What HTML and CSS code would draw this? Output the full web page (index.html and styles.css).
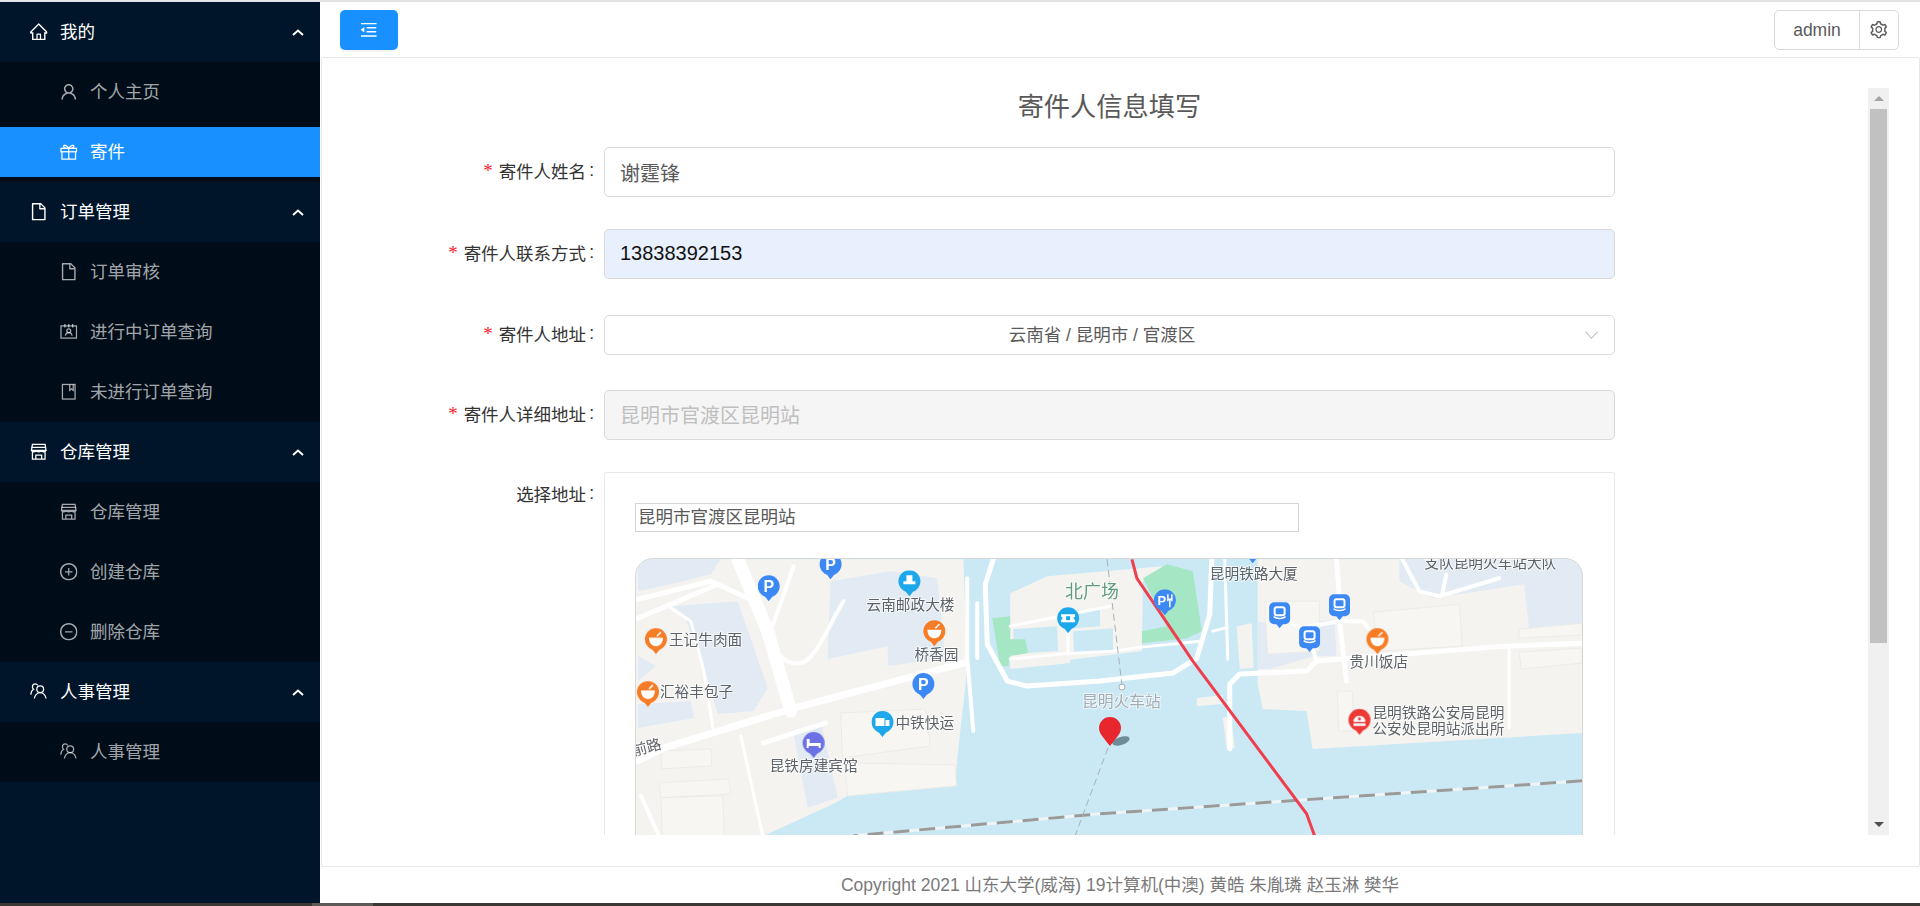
FILE: index.html
```html
<!DOCTYPE html>
<html lang="zh-CN">
<head>
<meta charset="utf-8">
<title>寄件人信息填写</title>
<link rel="stylesheet" href="styles.css">
</head>
<body>
<svg class="defs" aria-hidden="true">
  <defs>
    <symbol id="i-home" viewBox="64 64 896 896"><path d="M946.5 505L560.1 118.8l-25.9-25.9a31.5 31.5 0 0 0-44.4 0L77.5 505a63.9 63.9 0 0 0-18.8 46c.4 35.2 29.7 63.3 64.9 63.3h42.5V940h691.8V614.3h43.4c17.1 0 33.2-6.7 45.3-18.8a63.6 63.6 0 0 0 18.7-45.3c0-17-6.7-33.1-18.8-45.2zM568 868H456V664h112v204zm217.9-325.7V868H632V640c0-22.1-17.9-40-40-40H432c-22.1 0-40 17.9-40 40v228H238.1V542.3h-96l370-369.7 23.1 23.1L882 542.3h-96.1z"/></symbol>
    <symbol id="i-user" viewBox="64 64 896 896"><path d="M858.5 763.6a374 374 0 0 0-80.6-119.5 375.63 375.63 0 0 0-119.5-80.6c-.4-.2-.8-.3-1.2-.5C719.5 518 760 444.7 760 362c0-137-111-248-248-248S264 225 264 362c0 82.7 40.5 156 102.8 201.1-.4.2-.8.3-1.2.5-44.8 18.9-85 46-119.5 80.6a375.63 375.63 0 0 0-80.6 119.5A371.7 371.7 0 0 0 136 901.8a8 8 0 0 0 8 8.2h60c4.4 0 7.9-3.5 8-7.8 2-77.2 33-149.5 87.8-204.3 56.7-56.7 132-87.9 212.2-87.9s155.5 31.2 212.2 87.9C779 752.7 810 825 812 902.2c.1 4.4 3.6 7.8 8 7.8h60a8 8 0 0 0 8-8.2c-1-47.8-10.9-94.3-29.5-138.2zM512 534c-45.9 0-89.1-17.9-121.6-50.4S340 407.9 340 362c0-45.9 17.9-89.1 50.4-121.6S466.1 190 512 190s89.1 17.9 121.6 50.4S684 316.1 684 362c0 45.9-17.9 89.1-50.4 121.6S557.9 534 512 534z"/></symbol>
    <symbol id="i-file" viewBox="64 64 896 896"><path d="M854.6 288.6L639.4 73.4c-6-6-14.1-9.4-22.6-9.4H192c-17.7 0-32 14.3-32 32v832c0 17.7 14.3 32 32 32h640c17.7 0 32-14.3 32-32V311.3c0-8.5-3.4-16.7-9.4-22.7zM790.2 326H602V137.8L790.2 326zm1.8 562H232V136h302v216a42 42 0 0 0 42 42h216v494z"/></symbol>
    <symbol id="i-plus" viewBox="64 64 896 896"><path d="M696 480H544V328c0-4.4-3.6-8-8-8h-48c-4.4 0-8 3.6-8 8v152H328c-4.4 0-8 3.6-8 8v48c0 4.4 3.6 8 8 8h152v152c0 4.4 3.6 8 8 8h48c4.4 0 8-3.6 8-8V544h152c4.4 0 8-3.6 8-8v-48c0-4.4-3.6-8-8-8z"/><path d="M512 64C264.6 64 64 264.6 64 512s200.6 448 448 448 448-200.6 448-448S759.4 64 512 64zm0 820c-205.4 0-372-166.6-372-372s166.6-372 372-372 372 166.6 372 372-166.6 372-372 372z"/></symbol>
    <symbol id="i-minus" viewBox="64 64 896 896"><path d="M696 480H328c-4.4 0-8 3.6-8 8v48c0 4.4 3.6 8 8 8h368c4.4 0 8-3.6 8-8v-48c0-4.4-3.6-8-8-8z"/><path d="M512 64C264.6 64 64 264.6 64 512s200.6 448 448 448 448-200.6 448-448S759.4 64 512 64zm0 820c-205.4 0-372-166.6-372-372s166.6-372 372-372 372 166.6 372 372-166.6 372-372 372z"/></symbol>
    <symbol id="i-gift" viewBox="0 0 18 18"><g class="ln"><rect x="1" y="5.5" width="16" height="3.5"/><path d="M2 9v7.5h14V9M9 5.5v11M9 5.5C7 2 3.8 1.5 3.8 3.5S7 5.5 9 5.5C11 5.500 14.200 5.500 14.200 3.500S11 2 9 5.500"/></g></symbol>
    <symbol id="i-contacts" viewBox="0 0 18 18"><g class="ln"><rect x="1" y="3" width="16" height="12.500"/><path d="M5 1v3.500M9 1v3.500M13 1v3.500"/><circle cx="9" cy="8" r="2"/><path d="M5.500 13c.5-2 2-3 3.500-3s3 1 3.500 3"/></g></symbol>
    <symbol id="i-book" viewBox="0 0 18 18"><g class="ln"><rect x="2.500" y="1.500" width="13" height="15"/><path d="M10 1.500v6l1.800-1.500 1.800 1.500v-6"/></g></symbol>
    <symbol id="i-shop" viewBox="0 0 18 18"><g class="ln"><path d="M2.500 1.500h13l1 6h-15zM1.500 7.500c.5 2 4.500 2 5 0 .5 2 4.500 2 5 0 .5 2 4.500 2 5 0M2.500 9.500v7h13v-7M6 16.500v-4h6v4"/><path d="M1.500 4.500h15"/></g></symbol>
    <symbol id="i-team" viewBox="0 0 18 18"><g class="ln"><circle cx="10.500" cy="6.500" r="3.500"/><path d="M4.500 16c.3-3.500 3-6 6-6s5.700 2.500 6 6M8 2.500C7.300 1.500 6.500 1 5.500 1 3.800 1 2.500 2.300 2.500 4c0 1 .5 1.900 1.200 2.500C2 7.500 1 9.500.8 12"/></g></symbol>
    <symbol id="i-up" viewBox="0 0 12 7"><path class="arrow" d="M1 6l5-4.500L11 6"/></symbol>
    <symbol id="i-outdent" viewBox="64 64 896 896"><path d="M408 442h480c4.400 0 8-3.600 8-8v-56c0-4.400-3.600-8-8-8H408c-4.400 0-8 3.600-8 8v56c0 4.400 3.600 8 8 8zm-8 204c0 4.400 3.600 8 8 8h480c4.400 0 8-3.600 8-8v-56c0-4.400-3.600-8-8-8H408c-4.400 0-8 3.600-8 8v56zm504-486H120c-4.400 0-8 3.600-8 8v56c0 4.400 3.600 8 8 8h784c4.400 0 8-3.600 8-8v-56c0-4.400-3.600-8-8-8zm0 632H120c-4.400 0-8 3.600-8 8v56c0 4.400 3.600 8 8 8h784c4.400 0 8-3.600 8-8v-56c0-4.400-3.600-8-8-8zM115.400 518.900L271.700 642c5.800 4.600 14.400.5 14.400-6.900V388.900c0-7.400-8.500-11.500-14.400-6.900L115.400 505.100a8.740 8.740 0 0 0 0 13.800z"/></symbol>
    <symbol id="i-setting" viewBox="64 64 896 896"><path d="M924.800 625.700l-65.500-56c3.100-19 4.700-38.400 4.700-57.800s-1.600-38.800-4.700-57.800l65.500-56a32.030 32.030 0 0 0 9.300-35.200l-.9-2.600a443.740 443.740 0 0 0-79.700-137.900l-1.800-2.100a32.120 32.120 0 0 0-35.100-9.500l-81.300 28.900c-30-24.600-63.500-44-99.700-57.600l-15.700-85a32.050 32.050 0 0 0-25.800-25.700l-2.700-.5c-52.100-9.400-106.900-9.400-159 0l-2.700.5a32.050 32.050 0 0 0-25.800 25.700l-15.800 85.400a351.860 351.860 0 0 0-99 57.400l-81.900-29.100a32 32 0 0 0-35.100 9.500l-1.800 2.100a446.020 446.020 0 0 0-79.700 137.900l-.9 2.600c-4.500 12.500-.8 26.500 9.300 35.200l66.300 56.600c-3.100 18.800-4.600 38-4.600 57.100 0 19.200 1.500 38.400 4.600 57.100L99 625.500a32.030 32.030 0 0 0-9.300 35.200l.9 2.600c18.100 50.400 44.900 96.900 79.700 137.900l1.800 2.100a32.120 32.120 0 0 0 35.100 9.500l81.900-29.100c29.800 24.500 63.100 43.900 99 57.400l15.800 85.400a32.050 32.050 0 0 0 25.800 25.700l2.700.5a449.400 449.400 0 0 0 159 0l2.700-.5a32.050 32.050 0 0 0 25.800-25.700l15.700-85a350 350 0 0 0 99.700-57.600l81.300 28.900a32 32 0 0 0 35.100-9.500l1.800-2.100c34.800-41.100 61.600-87.500 79.700-137.900l.9-2.600c4.500-12.300.8-26.300-9.300-35zM788.300 465.900c2.500 15.100 3.800 30.600 3.800 46.100s-1.300 31-3.800 46.100l-6.600 40.100 74.700 63.900a370.030 370.030 0 0 1-42.600 73.600L721 702.800l-31.400 25.800c-23.900 19.600-50.500 35-79.300 45.800l-38.100 14.300-17.900 97a377.500 377.500 0 0 1-85 0l-17.900-97.200-37.800-14.500c-28.500-10.800-55-26.200-78.700-45.700l-31.400-25.900-93.400 33.200c-17-22.900-31.200-47.600-42.600-73.600l75.500-64.500-6.500-40c-2.400-14.900-3.700-30.300-3.700-45.500 0-15.300 1.200-30.600 3.700-45.500l6.500-40-75.500-64.500c11.300-26.100 25.600-50.700 42.600-73.600l93.400 33.200 31.400-25.900c23.700-19.500 50.200-34.900 78.700-45.700l37.900-14.300 17.900-97.200c28.100-3.200 56.800-3.200 85 0l17.900 97 38.100 14.300c28.700 10.800 55.400 26.200 79.300 45.800l31.400 25.800 92.800-32.900c17 22.900 31.200 47.600 42.600 73.600L781.800 426l6.500 39.900zM512 326c-97.200 0-176 78.800-176 176s78.800 176 176 176 176-78.800 176-176-78.800-176-176-176zm79.200 255.200A111.600 111.600 0 0 1 512 614c-29.900 0-58-11.700-79.200-32.800A111.600 111.600 0 0 1 400 502c0-29.900 11.700-58 32.800-79.200C454 401.600 482.100 390 512 390c29.900 0 58 11.600 79.200 32.800A111.600 111.600 0 0 1 624 502c0 29.900-11.700 58-32.800 79.200z"/></symbol>

    <g id="pin-p"><circle r="11" class="p-blue"/><path d="M-4 10L0 15 4 10z" class="p-blue"/><text class="pin-t" y="5.500" text-anchor="middle">P</text></g>
    <g id="pin-bowl"><circle r="11" class="p-orange"/><path d="M-4 10L0 15 4 10z" class="p-orange"/><path d="M-7 -1.500H7C7 5 3 7 0 7S-7 5-7-1.500z" class="p-white"/><path d="M1-3L5-7" class="p-stroke"/></g>
    <g id="pin-post"><circle r="11" class="p-cyan"/><path d="M-4 10L0 15 4 10z" class="p-cyan"/><path d="M-3-6H3V0H6V3H-6V0H-3z" class="p-white"/></g>
    <g id="pin-truck"><circle r="11" class="p-cyan"/><path d="M-4 10L0 15 4 10z" class="p-cyan"/><path d="M-7-4H2V4H-7zM3-2H7V4H3z" class="p-white"/></g>
    <g id="pin-ticket"><circle r="11" class="p-cyan"/><path d="M-4 10L0 15 4 10z" class="p-cyan"/><path d="M-7-4H7V-1.500A1.500 1.500 0 0 0 7 1.500V4H-7V1.500A1.500 1.500 0 0 0-7-1.500z" class="p-white"/><rect x="-2" y="-2" width="4" height="4" class="p-cyan"/></g>
    <g id="pin-hotel"><circle r="11" class="p-purple"/><path d="M-4 10L0 15 4 10z" class="p-purple"/><path d="M-7-4H-4V0H7V5H5V3H-5V5H-7z" class="p-white"/></g>
    <g id="pin-bus"><rect x="-10.500" y="-11" width="21" height="22" rx="5" class="p-blue"/><path d="M-4 10L0 15 4 10z" class="p-blue"/><rect x="-5" y="-6" width="10" height="8" rx="2" class="p-hollow"/><path d="M-6 3.500C-3 6 3 6 6 3.500" class="p-stroke"/></g>
    <g id="pin-food"><circle r="11" class="p-blue"/><path d="M-4 10L0 15 4 10z" class="p-blue"/><text class="pin-s" x="-3" y="5" text-anchor="middle">P</text><path d="M3-6V1M7-6V1M3-1H7M5-1V7" class="p-stroke"/></g>
    <g id="pin-police"><circle r="11" class="p-red"/><path d="M-4 10L0 15 4 10z" class="p-red"/><path d="M-6 2C-6-6 6-6 6 2zM-6 3.500H6V6H-6z" class="p-white"/><circle cy="-1" r="1.500" class="p-red"/></g>
  </defs>
</svg>

<div class="topline"></div>
<div class="app">
  <aside class="sider">
    <div class="sub-title"><svg class="ic"><use href="#i-home"/></svg><span class="sub-name">我的</span><svg class="up"><use href="#i-up"/></svg></div>
    <ul class="sub-menu">
      <li class="item"><svg class="ic"><use href="#i-user"/></svg><span class="item-name">个人主页</span></li>
      <li class="item active"><svg class="ic"><use href="#i-gift"/></svg><span class="item-name">寄件</span></li>
    </ul>
    <div class="sub-title"><svg class="ic"><use href="#i-file"/></svg><span class="sub-name">订单管理</span><svg class="up"><use href="#i-up"/></svg></div>
    <ul class="sub-menu">
      <li class="item"><svg class="ic"><use href="#i-file"/></svg><span class="item-name">订单审核</span></li>
      <li class="item"><svg class="ic"><use href="#i-contacts"/></svg><span class="item-name">进行中订单查询</span></li>
      <li class="item"><svg class="ic"><use href="#i-book"/></svg><span class="item-name">未进行订单查询</span></li>
    </ul>
    <div class="sub-title"><svg class="ic"><use href="#i-shop"/></svg><span class="sub-name">仓库管理</span><svg class="up"><use href="#i-up"/></svg></div>
    <ul class="sub-menu">
      <li class="item"><svg class="ic"><use href="#i-shop"/></svg><span class="item-name">仓库管理</span></li>
      <li class="item"><svg class="ic"><use href="#i-plus"/></svg><span class="item-name">创建仓库</span></li>
      <li class="item"><svg class="ic"><use href="#i-minus"/></svg><span class="item-name">删除仓库</span></li>
    </ul>
    <div class="sub-title"><svg class="ic"><use href="#i-team"/></svg><span class="sub-name">人事管理</span><svg class="up"><use href="#i-up"/></svg></div>
    <ul class="sub-menu">
      <li class="item"><svg class="ic"><use href="#i-team"/></svg><span class="item-name">人事管理</span></li>
    </ul>
  </aside>

  <div class="main">
    <header class="header">
      <button class="collapse" type="button"><svg class="ic"><use href="#i-outdent"/></svg></button>
      <div class="user-group">
        <span class="user-name">admin</span>
        <span class="user-gear"><svg class="ic"><use href="#i-setting"/></svg></span>
      </div>
    </header>

    <section class="card">
      <div class="scroller">
        <h1 class="title">寄件人信息填写</h1>

        <div class="row">
          <label class="label"><i class="req">*</i>寄件人姓名<span class="colon">:</span></label>
          <div class="input name">谢霆锋</div>
        </div>
        <div class="row">
          <label class="label"><i class="req">*</i>寄件人联系方式<span class="colon">:</span></label>
          <div class="input phone">13838392153</div>
        </div>
        <div class="row row-select">
          <label class="label"><i class="req">*</i>寄件人地址<span class="colon">:</span></label>
          <div class="input select">
            <span class="select-text">云南省 / 昆明市 / 官渡区</span>
            <svg class="chev" viewBox="0 0 16 10"><path d="M1.500 1.500L8 8.500l6.500-7"/></svg>
          </div>
        </div>
        <div class="row row-detail">
          <label class="label"><i class="req">*</i>寄件人详细地址<span class="colon">:</span></label>
          <div class="input disabled">昆明市官渡区昆明站</div>
        </div>
        <div class="row row-map">
          <label class="label label-top">选择地址<span class="colon">:</span></label>
          <div class="map-card">
            <div class="map-search">昆明市官渡区昆明站</div>
            <div class="map">
              <svg class="map-svg" viewBox="635 558 948 300" width="946" height="300">
                <g class="shapes">
                  <polygon class="land" points="635,558 963,558 967,667 957,757 955,785 847,795 833,803 763,835 740,860 635,860"/>
                  <polygon class="land" points="1258,558 1583,558 1583,732 1313,748 1307,710 1263,708 1258,683"/>
                  <polygon class="land" points="1010,592 1047,575 1163,565 1143,580 1142,650 1060,660 1010,665"/>
                  <polygon class="land" points="1010,660 1070,655 1070,662 1010,668"/>
                  <polygon class="land" points="1237,625 1252,622 1254,667 1240,668"/>
                  <polygon class="land" points="1197,697 1223,694 1223,703 1197,705"/>
                  <polygon class="land" points="1223,717 1231,715 1235,747 1227,748"/>
                  <polygon class="water" points="1013,628 1057,625 1058,650 1014,653"/>
                  <polygon class="water" points="1073,610 1100,608 1100,625 1073,627"/>
                  <polygon class="water" points="1073,630 1113,627 1113,650 1074,652"/>
                  <polygon class="block" points="672,605 737,600 767,687 753,710 717,713 703,667 683,613"/>
                  <polygon class="block" points="637,558 720,558 710,573 670,583 637,590"/>
                  <polygon class="block" points="830,580 890,570 937,577 945,657 888,665 887,645 827,658"/>
                  <polygon class="block" points="793,733 820,720 837,797 807,807"/>
                  <polygon class="block" points="637,703 690,700 693,717 637,727"/>
                  <polygon class="block" points="637,655 655,665 637,680"/>
                  <polygon class="block" points="1400,558 1583,558 1583,623 1530,627 1525,583 1433,597 1400,580"/>
                  <polygon class="block" points="1258,620 1290,625 1335,618 1337,655 1315,655 1270,668 1258,668"/>
                  <polygon class="build" points="1374,611 1460,603 1463,645 1378,650"/>
                  <polygon class="build" points="1265,600 1320,600 1320,650 1268,653"/>
                  <polygon class="build" points="1520,628 1583,622 1583,634 1520,637"/>
                  <polygon class="build" points="1520,651 1583,647 1583,662 1522,668"/>
                  <polygon class="build" points="1338,690 1353,690 1354,730 1339,730"/>
                  <polygon class="build" points="844,762 955,764 956,785 847,795"/>
                  <polygon class="build" points="840,712 925,708 930,745 842,757"/>
                  <polygon class="build" points="660,750 710,748 711,765 661,768"/>
                  <polygon class="build" points="658,782 728,778 730,793 660,797"/>
                  <polygon class="build" points="660,797 722,795 724,850 662,850"/>
                  <polygon class="green" points="992,617 1010,615 1010,638 1025,638 1028,652 1010,655 1008,665 1000,665"/>
                  <polygon class="green" points="1143,577 1167,563 1193,570 1202,630 1187,637 1142,642 1142,630 1167,625"/>

                  <g class="road">
                    <path class="w14" d="M737 558L767 630L790 710"/>
                    <path class="w7" d="M637 760L663 747L793 707L963 662"/>
                    <path class="w5" d="M637 598L710 580L747 597"/>
                    <path class="w5" d="M637 617L670 603L717 583"/>
                    <path class="w3" d="M670 607L690 620L703 670L712 727"/>
                    <path class="w4" d="M793 565L770 630C770 650 785 665 800 662C815 660 830 620 843 600"/>
                    <path class="w4" d="M967 577V657L973 730"/>
                    <path class="w4" d="M977 602V657"/>
                    <path class="w4" d="M640 795L658 835"/>
                    <path class="w3" d="M740 735L762 835"/>
                    <path class="w5" d="M763 742L825 722"/>
                    <path class="w5" d="M993 558L985 583L987 643L1007 680L1027 685L1100 680L1173 672L1197 657L1210 613L1212 558"/>
                    <path class="w3" d="M1010 658L1060 653L1113 650L1142 646L1200 640"/>
                    <path class="w3" d="M1068 627V653"/>
                    <path class="w3" d="M1010 625L1110 605"/>
                    <path class="w5" d="M1230 748V683L1240 673L1307 670L1317 660L1507 645L1583 642"/>
                    <path class="w4" d="M1290 620L1300 627L1340 620L1363 620L1372 630"/>
                    <path class="w4" d="M1313 647L1317 660"/>
                    <path class="w5" d="M1340 620L1347 680"/>
                    <path class="w5" d="M1337 558L1340 597"/>
                    <path class="w3" d="M1510 647V727"/>
                    <path class="w4" d="M1403 558L1420 590L1440 595L1500 577"/>
                    <path class="w4" d="M1447 573L1443 593"/>
                    <path class="w3" d="M1225 558L1228 658"/>
                    <path class="w3" d="M1213 630L1225 627"/>
                  </g>

                  <path class="rail-base" d="M1583 780L1100 813L853 835"/>
                  <path class="rail-dash" d="M1583 780L1100 813L853 835"/>
                  <path class="tick" d="M1107 558L1122 684"/>
                  <path class="tick" d="M1108 747L1075 835"/>
                  <circle class="node" cx="1122" cy="686" r="3"/>
                  <path class="metro" d="M1132 558L1137 577L1193 660L1307 813L1315 835"/>
                </g>

                <g class="labels">
                  <text class="lb" x="668" y="644">王记牛肉面</text>
                  <text class="lb" x="659" y="696">汇裕丰包子</text>
                  <text class="lb tilt" x="634" y="755">前路</text>
                  <text class="lb" x="866" y="609">云南邮政大楼</text>
                  <text class="lb" x="914" y="659">桥香园</text>
                  <text class="lb" x="895" y="727">中铁快运</text>
                  <text class="lb" x="769" y="770">昆铁房建宾馆</text>
                  <text class="lb-green" x="1065" y="597">北广场</text>
                  <text class="lb" x="1210" y="578">昆明铁路大厦</text>
                  <text class="lb" x="1425" y="567">支队昆明火车站大队</text>
                  <text class="lb" x="1350" y="666">贵川饭店</text>
                  <text class="lb" x="1373" y="717">昆明铁路公安局昆明</text>
                  <text class="lb" x="1373" y="733">公安处昆明站派出所</text>
                  <text class="lb-faint" x="1082" y="706">昆明火车站</text>
                </g>

                <g class="pins">
                  <use href="#pin-p" transform="translate(768 585)"/>
                  <use href="#pin-p" transform="translate(830 563)"/>
                  <use href="#pin-p" transform="translate(923 683)"/>
                  <use href="#pin-post" transform="translate(909 580)"/>
                  <use href="#pin-bowl" transform="translate(655 638)"/>
                  <use href="#pin-bowl" transform="translate(647 691)"/>
                  <use href="#pin-bowl" transform="translate(934 630)"/>
                  <use href="#pin-bowl" transform="translate(1378 638)"/>
                  <use href="#pin-truck" transform="translate(882 721)"/>
                  <use href="#pin-hotel" transform="translate(813 742)"/>
                  <use href="#pin-ticket" transform="translate(1068 617)"/>
                  <use href="#pin-food" transform="translate(1165 599)"/>
                  <use href="#pin-bus" transform="translate(1280 612)"/>
                  <use href="#pin-bus" transform="translate(1340 604)"/>
                  <use href="#pin-bus" transform="translate(1310 636)"/>
                  <use href="#pin-police" transform="translate(1360 719)"/>
                  <use href="#pin-p" transform="translate(1253 547)"/>
                </g>

                <ellipse class="marker-shadow" cx="1121" cy="740" rx="9" ry="4"/>
                <path class="marker" d="M1110 745C1104 737 1099 733 1099 727a11 11 0 0 1 22 0C1121 733 1116 737 1110 745z"/>
              </svg>
            </div>
          </div>
        </div>
      </div>

      <div class="scrollbar">
        <span class="sb-arrow sb-up"></span>
        <span class="sb-thumb"></span>
        <span class="sb-space"></span>
        <span class="sb-arrow sb-down"></span>
      </div>
    </section>

    <footer class="footer">Copyright 2021 山东大学(威海) 19计算机(中澳) 黄皓 朱胤璘 赵玉淋 樊华</footer>
  </div>
</div>
<div class="taskbar"></div>
</body>
</html>
```

FILE: styles.css
```css
* { box-sizing: border-box; }
html, body { margin: 0; padding: 0; height: 100%; }
body {
  display: flex;
  flex-direction: column;
  height: 906px;
  overflow: hidden;
  background: #fff;
  font-family: "Liberation Sans", "Noto Sans CJK SC", sans-serif;
  font-size: 17.5px;
  color: #333;
}
.defs { width: 0; height: 0; position: absolute; }
.topline { height: 2px; background: #e3e3e3; flex: none; }
.taskbar {
  height: 3px;
  flex: none;
  background: linear-gradient(90deg, #3b3733 0, #3b3733 312px, #5d5a57 312px, #5d5a57 373px, #3b3733 373px);
}
.app { flex: 1; display: flex; min-height: 0; }

/* sidebar */
.sider { width: 320px; flex: none; background: #001529; color: #fff; }
.sub-title {
  height: 60px;
  display: flex;
  align-items: center;
  padding: 0 15px 0 30px;
  color: #fff;
}
.ic { width: 17.5px; height: 17.5px; fill: currentColor; flex: none; }
.ln { fill: none; stroke: currentColor; stroke-width: 1.300; }
.sub-name { margin-left: 12.5px; flex: 1; padding-bottom: 3px; }
.item-name { padding-bottom: 3px; }
.up { width: 12px; height: 7px; flex: none; margin-right: 1px; }
.arrow { fill: none; stroke: #fff; stroke-width: 2; }
.sub-menu {
  list-style: none;
  margin: 0;
  padding: 5px 0;
  background: #000c17;
  display: flex;
  flex-direction: column;
  gap: 10px;
}
.item {
  height: 50px;
  display: flex;
  align-items: center;
  gap: 12.5px;
  padding-left: 60px;
  color: rgba(255, 255, 255, .65);
}
.item.active { background: #1890ff; color: #fff; }

/* main column */
.main { flex: 1; min-width: 0; display: flex; flex-direction: column; }
.header {
  height: 55px;
  flex: none;
  display: flex;
  align-items: center;
  justify-content: space-between;
  padding: 8px 21px 7px 20px;
  background: #fff;
}
.collapse {
  width: 58px;
  height: 40px;
  border: 0;
  border-radius: 5px;
  background: #1890ff;
  color: #fff;
  padding: 0;
  display: flex;
  align-items: center;
  justify-content: center;
  box-shadow: 0 2px 0 rgba(0, 0, 0, .04);
}
.user-group {
  display: flex;
  height: 40px;
  border: 1px solid #d9d9d9;
  border-radius: 5px;
  color: #595959;
}
.user-name { width: 85px; display: flex; align-items: center; justify-content: center; border-right: 1px solid #d9d9d9; }
.user-gear { width: 38px; display: flex; align-items: center; justify-content: center; }

.card {
  flex: 1;
  min-height: 0;
  display: flex;
  align-items: stretch;
  margin-left: 1px;
  padding: 30px 30px 30px 9px;
  border: 1px solid #e8e8e8;
  border-radius: 2px;
  background: #fff;
}
.scroller { flex: 1; min-width: 0; height: 747px; overflow: hidden; }
.title {
  margin: 0 0 21px;
  padding-left: 20px;
  height: 38px;
  line-height: 38px;
  text-align: center;
  font-size: 26.250px;
  font-weight: 400;
  color: #595959;
}
.row { display: flex; align-items: center; gap: 10px; margin-bottom: 32px; }
.row-select { margin-top: 36px; margin-bottom: 35px; }
.row-detail { margin-bottom: 32px; }
.row-map { align-items: flex-start; margin-bottom: 0; }
.label {
  width: 263px;
  flex: none;
  display: flex;
  justify-content: flex-end;
  align-items: center;
  padding-bottom: 3px;
  color: #333;
}
.colon { margin-left: 3px; }
.label-top { padding-top: 9px; padding-bottom: 0; }
.req { font-style: normal; color: #f5222d; margin-right: 6px; font-family: "Liberation Serif", serif; font-size: 19px; }
.input {
  width: 1011px;
  height: 50px;
  display: flex;
  align-items: center;
  padding: 0 15px;
  border: 1px solid #d9d9d9;
  border-radius: 5px;
  background: #fff;
  font-size: 20px;
  color: #595959;
}
.phone { background: #e8f0fe; color: #111; padding-bottom: 2px; }
.disabled { background: #f5f5f5; color: #bfbfbf; padding-bottom: 2px; }
.select { height: 40px; font-size: 17.5px; position: relative; justify-content: center; padding-left: 0; padding-right: 15px; padding-bottom: 4px; }
.select-text { color: #595959; }
.chev {
  position: absolute;
  right: 15px;
  top: 14px;
  width: 15px;
  height: 10px;
  fill: none;
  stroke: #bfbfbf;
  stroke-width: 1.200;
}

/* map */
.map-card {
  width: 1011px;
  height: 480px;
  flex: none;
  border: 1px solid #e8e8e8;
  border-radius: 3px;
  padding: 30px 30px 0;
}
.map-search {
  width: 664px;
  height: 29px;
  line-height: 26px;
  padding-left: 2px;
  border: 1px solid #d4d4d4;
  color: #595959;
  font-size: 17.5px;
}
.map {
  width: 948px;
  height: 340px;
  margin-top: 26px;
  border: 1px solid #d8d8d8;
  border-radius: 18px 18px 0 0;
  background: #cbe9f5;
  overflow: hidden;
}
.map-svg { display: block; font-family: "Noto Sans CJK SC", sans-serif; }
.shapes { filter: blur(.6px); }
.land { fill: #f4f3f0; }
.water { fill: #cbe9f5; }
.block { fill: #e2eaf3; }
.build { fill: #f7f6f3; stroke: #ecebe7; stroke-width: 1; }
.green { fill: #a5e6c4; }
.road path { fill: none; stroke: #fff; stroke-linejoin: round; stroke-linecap: round; }
.road .w14 { stroke-width: 13; }
.road .w7 { stroke-width: 7; }
.road .w5 { stroke-width: 5; }
.road .w4 { stroke-width: 4; }
.road .w3 { stroke-width: 3; }
.rail-base { fill: none; stroke: #eef4f7; stroke-width: 3; }
.rail-dash { fill: none; stroke: #9a9a9a; stroke-width: 3; stroke-dasharray: 16 10; }
.tick { fill: none; stroke: #a8b0b4; stroke-width: 1; stroke-dasharray: 7 4; }
.node { fill: #fff; stroke: #a8b0b4; stroke-width: 1; }
.metro { fill: none; stroke: #ef3f4f; stroke-width: 3; }
.labels { filter: blur(.3px); }
.lb { font-size: 14.700px; fill: #5c6268; paint-order: stroke; stroke: rgba(255, 255, 255, .7); stroke-width: 2px; }
.lb-green { font-size: 18px; fill: #5f9c7f; paint-order: stroke; stroke: rgba(255, 255, 255, .6); stroke-width: 2px; }
.lb-faint { font-size: 15.800px; fill: #a6adb2; paint-order: stroke; stroke: rgba(255, 255, 255, .6); stroke-width: 2px; }
.tilt { transform: rotate(-15deg); transform-box: fill-box; transform-origin: left bottom; }
.pins { filter: blur(.3px); }
.p-blue { fill: #3c89f5; }
.p-orange { fill: #f67c26; }
.p-cyan { fill: #1ea8ec; }
.p-purple { fill: #6c72e4; }
.p-red { fill: #ee3a36; }
.p-white { fill: #fff; }
.p-hollow { fill: none; stroke: #fff; stroke-width: 2; }
.p-stroke { fill: none; stroke: #fff; stroke-width: 1.500; }
.pin-t { font-family: "Liberation Sans", sans-serif; font-size: 16px; font-weight: 700; fill: #fff; }
.pin-s { font-family: "Liberation Sans", sans-serif; font-size: 13px; font-weight: 700; fill: #fff; }
.marker { fill: #e8262d; }
.marker-shadow { fill: #6d8b99; transform: rotate(-18deg); transform-box: fill-box; transform-origin: center; }

/* scrollbar */
.scrollbar {
  width: 21px;
  height: 747px;
  flex: none;
  display: flex;
  flex-direction: column;
  align-items: center;
  background: #f0f0f0;
}
.sb-arrow { height: 21px; flex: none; width: 100%; display: flex; align-items: center; justify-content: center; }
.sb-arrow::before { content: ""; border-left: 5px solid transparent; border-right: 5px solid transparent; }
.sb-up::before { border-bottom: 5px solid #a3a3a3; }
.sb-down::before { border-top: 5px solid #505050; }
.sb-thumb { width: 17px; height: 534px; flex: none; background: #c1c1c1; }
.sb-space { flex: 1; }

.footer {
  height: 36px;
  flex: none;
  display: flex;
  align-items: center;
  justify-content: center;
  padding-bottom: 4px;
  color: #7a7a7a;
  background: #fff;
}
```
